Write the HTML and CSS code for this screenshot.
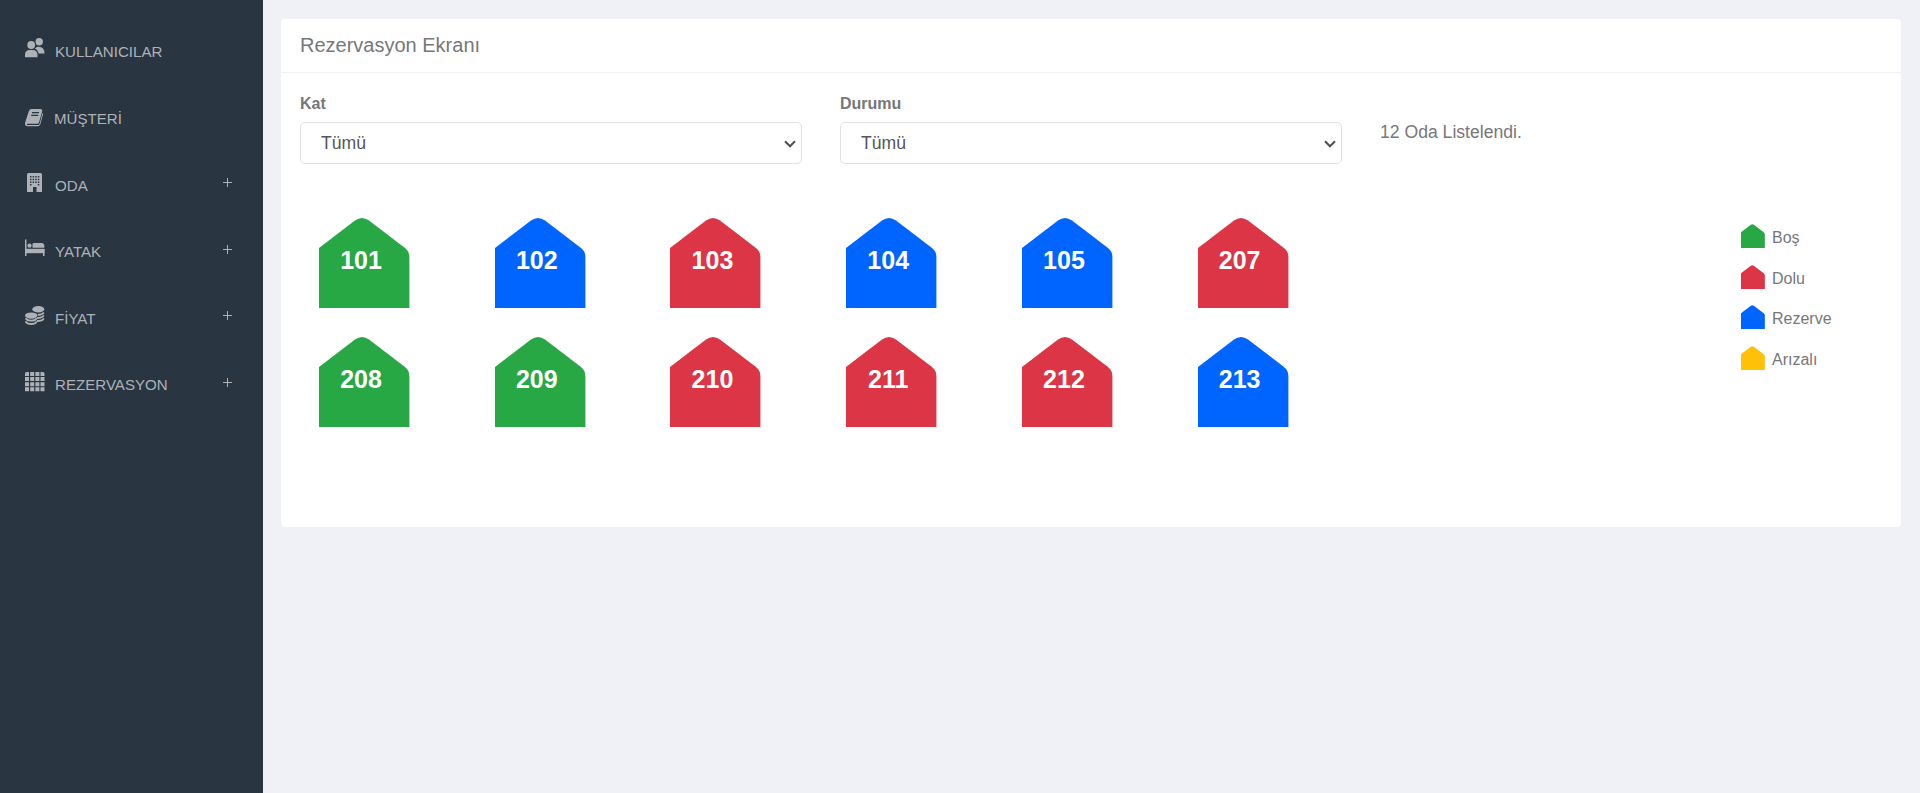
FILE: index.html
```html
<!DOCTYPE html>
<html lang="tr">
<head>
<meta charset="utf-8">
<title>Rezervasyon Ekranı</title>
<link rel="stylesheet" href="styles.css">
</head>
<body>
<svg class="defs" aria-hidden="true">
  <symbol id="house" viewBox="0 0 91 91"><path d="M0 31 L36 3.500 Q43 -1.500 50 3.500 L86 31 Q90.400 34.500 90.400 40 V91 H0Z"/></symbol>
</svg>
<div class="layout">
  <nav class="sidebar">
    <a class="item users"><svg class="icon" viewBox="0 0 20 20"><circle cx="14.200" cy="3.700" r="3.700"/><path d="M12.500 8.700 Q19.500 8 19.500 15.500 H13.500 Q13 12 9.800 10.600 Q11 9 12.500 8.700Z"/><circle class="cut" cx="6.200" cy="7" r="4.600"/><circle cx="6.200" cy="7" r="3.900"/><path d="M0 19.300 V17 Q0 12 5 12 H7.500 Q12.500 12 12.500 17 V19.300Z"/></svg><span class="name">KULLANICILAR</span></a>
    <a class="item book"><svg class="icon" viewBox="0 0 20 20"><path d="M6.500 1 H15.300 Q17.700 1.200 17.100 3.700 L14 14.500 Q13.500 15.700 12 15.700 H3 Q1.800 15.700 1.800 16.500 Q2 17.100 3 17.100 H13 Q14.200 17.100 14.700 15.600 L17.500 5 Q18.300 5.500 18 6.500 L15.300 16.200 Q14.600 18.300 12.800 18.300 H2.700 Q-.6 18 .1 14.800 L3.800 3.200 Q4.600 1 6.500 1Z"/><path class="line" d="M7 4.600 H14 M6.200 7.300 H13.200"/></svg><span class="name">MÜŞTERİ</span></a>
    <a class="item"><svg class="icon" viewBox="0 0 20 20"><path fill-rule="evenodd" d="M3.500 0 H15.500 Q17 0 17 1.500 V19 H11.500 V14 H8 V19 H2 V1.500 Q2 0 3.500 0Z M5 3h1.500v1.500h-1.500z M7.600 3h1.500v1.500h-1.500z M10.200 3h1.500v1.500h-1.500z M12.800 3h1.500v1.500h-1.500z M5 5.700h1.500v1.500h-1.500z M7.600 5.700h1.500v1.500h-1.500z M10.200 5.700h1.500v1.500h-1.500z M12.800 5.700h1.500v1.500h-1.500z M5 8.400h1.500v1.500h-1.500z M7.600 8.400h1.500v1.500h-1.500z M10.200 8.400h1.500v1.500h-1.500z M12.800 8.400h1.500v1.500h-1.500z M5 11.100h1.500v1.500h-1.500z M12.800 11.100h1.500v1.500h-1.500z"/></svg><span class="name">ODA</span><svg class="plus" viewBox="0 0 9 9"><path d="M4.500 0V9M0 4.500H9"/></svg></a>
    <a class="item"><svg class="icon" viewBox="0 0 20 20"><path d="M0 .5 H1.500 V10 H19.500 V17 H18 V14 H1.500 V17 H0Z"/><circle cx="4.500" cy="6.700" r="2.100"/><path d="M7.500 8.800 V5 Q7.500 4 9 4 H17 Q19.300 4.200 19.300 6.500 V8.800Z"/><path d="M1 9.800H19.500V14.200H1Z"/></svg><span class="name">YATAK</span><svg class="plus" viewBox="0 0 9 9"><path d="M4.500 0V9M0 4.500H9"/></svg></a>
    <a class="item"><svg class="icon" viewBox="0 0 20 20"><ellipse cx="13.300" cy="3.300" rx="6" ry="3.200"/><path class="coin" d="M18.800 6.500 Q17.500 8.800 12 9 M18.800 9.300 Q17.500 11.800 12 12 M18.800 12.300 Q17.500 15 12 15"/><ellipse class="cut" cx="6.200" cy="9.600" rx="6.900" ry="3.900"/><ellipse cx="6.200" cy="9.600" rx="6.200" ry="3.200"/><path class="coin" d="M.6 12.200 Q2 14.600 6.200 14.600 T11.800 12.200 M.6 15.300 Q2 18 6.200 18 T11.800 15.300"/></svg><span class="name">FİYAT</span><svg class="plus" viewBox="0 0 9 9"><path d="M4.500 0V9M0 4.500H9"/></svg></a>
    <a class="item"><svg class="icon" viewBox="0 0 20 20"><path d="M1.500 0H4V4H0V1.500Q0 0 1.500 0Z M5.200 0h4v4h-4z M10.400 0h4v4h-4z M15.500 0H18Q19.500 0 19.500 1.500V4H15.500Z M0 5.100h4v4h-4z M5.200 5.100h4v4h-4z M10.400 5.100h4v4h-4z M15.500 5.100h4v4h-4z M0 10.200h4v4h-4z M5.200 10.200h4v4h-4z M10.400 10.200h4v4h-4z M15.500 10.200h4v4h-4z M0 15.300h4v4h-4z M5.200 15.300h4v4h-4z M10.400 15.300h4v4h-4z M15.500 15.300h4v4h-4z"/></svg><span class="name">REZERVASYON</span><svg class="plus" viewBox="0 0 9 9"><path d="M4.500 0V9M0 4.500H9"/></svg></a>
  </nav>
  <main class="content">
    <section class="card">
      <h1 class="title">Rezervasyon Ekranı</h1>
      <div class="filters">
        <div class="field"><span class="label">Kat</span><div class="select"><span>Tümü</span><svg class="chevron" viewBox="0 0 12 8"><path d="M1 1.300 L6 6.300 L11 1.300"/></svg></div></div>
        <div class="field"><span class="label">Durumu</span><div class="select"><span>Tümü</span><svg class="chevron" viewBox="0 0 12 8"><path d="M1 1.300 L6 6.300 L11 1.300"/></svg></div></div>
        <p class="count">12 Oda Listelendi.</p>
      </div>
      <div class="board">
        <div class="rooms">
          <div class="room green"><svg class="shape"><use href="#house"/></svg><b>101</b></div>
          <div class="room blue"><svg class="shape"><use href="#house"/></svg><b>102</b></div>
          <div class="room red"><svg class="shape"><use href="#house"/></svg><b>103</b></div>
          <div class="room blue"><svg class="shape"><use href="#house"/></svg><b>104</b></div>
          <div class="room blue"><svg class="shape"><use href="#house"/></svg><b>105</b></div>
          <div class="room red"><svg class="shape"><use href="#house"/></svg><b>207</b></div>
          <div class="room green"><svg class="shape"><use href="#house"/></svg><b>208</b></div>
          <div class="room green"><svg class="shape"><use href="#house"/></svg><b>209</b></div>
          <div class="room red"><svg class="shape"><use href="#house"/></svg><b>210</b></div>
          <div class="room red"><svg class="shape"><use href="#house"/></svg><b>211</b></div>
          <div class="room red"><svg class="shape"><use href="#house"/></svg><b>212</b></div>
          <div class="room blue"><svg class="shape"><use href="#house"/></svg><b>213</b></div>
        </div>
        <div class="legend">
          <div class="key green"><svg class="mini"><use href="#house"/></svg><span>Boş</span></div>
          <div class="key red"><svg class="mini"><use href="#house"/></svg><span>Dolu</span></div>
          <div class="key blue"><svg class="mini"><use href="#house"/></svg><span>Rezerve</span></div>
          <div class="key yellow"><svg class="mini"><use href="#house"/></svg><span>Arızalı</span></div>
        </div>
      </div>
    </section>
  </main>
</div>
</body>
</html>
```
FILE: styles.css
```css
* { box-sizing: border-box; }
body { margin: 0; background: #f0f1f6; color: #76777a; font: 16px/24px "Liberation Sans", Arial, sans-serif; }
.defs { display: none; }
.layout { display: flex; height: 793px; }
.sidebar { width: 263px; flex: none; background: #2a3542; color: #aeb2b7; padding-top: 19.200px; }
.item { display: flex; align-items: center; height: 66.6px; padding: 0 31px 0 25px; font-size: 15.1px; }
.icon { width: 20px; height: 20px; margin: -6px 10px 0 0; fill: #aeb2b7; overflow: visible; }
.users .icon { margin-top: -8px; }
.book .icon { margin: -2px 9px 0 0; }
.cut { fill: #2a3542; }
.line { stroke: #2a3542; stroke-width: 1.2; }
.coin { fill: none; stroke: #aeb2b7; stroke-width: 1.8; }
.name { flex: 1; }
.plus { width: 9px; height: 9px; margin-top: -6px; stroke: #aeb2b7; stroke-width: 1; }
.content { flex: 1; padding: 19px 19px 0 18px; }
.card { height: 508px; background: #fff; border-radius: 4px; }
.title { margin: 0; height: 54px; padding: 14px 19px 0; border-bottom: 1px solid #eff0f3; font-size: 20px; font-weight: 400; line-height: 24px; }
.filters { display: flex; gap: 38px; padding: 19px 19px 0; }
.field { width: 502px; display: flex; flex-direction: column; }
.label { height: 30px; line-height: 24px; font-weight: 700; }
.select { height: 42px; display: flex; align-items: center; justify-content: space-between; padding: 0 5px 0 20px; border: 1px solid #dfe1e3; border-radius: 5px; color: #55565a; font-size: 17.6px; }
.chevron { width: 12px; height: 8px; margin-top: 2px; fill: none; stroke: #4f5053; stroke-width: 2; }
.count { margin: 28px 0 0; font-size: 17.6px; line-height: 24px; }
.board { display: flex; justify-content: space-between; padding: 53px 56px 0 38px; }
.rooms { display: grid; grid-template-columns: repeat(6, 175.740px); grid-auto-rows: 119px; }
.room { display: grid; width: 91px; height: 91px; }
.room > * { grid-area: 1 / 1; }
.room b { width: 84px; padding-top: 29px; text-align: center; color: #fff; font-size: 25px; line-height: 28px; }
.shape { width: 91px; height: 91px; fill: currentColor; }
.legend { display: flex; flex-direction: column; gap: 16.700px; width: 104px; padding-top: 7px; }
.key { display: flex; gap: 7px; height: 24px; }
.mini { width: 24px; height: 24px; fill: currentColor; }
.key span { color: #76777a; line-height: 28px; }
.green { color: #28a745; }
.red { color: #dc3545; }
.blue { color: #0065ff; }
.yellow { color: #ffc107; }
```
